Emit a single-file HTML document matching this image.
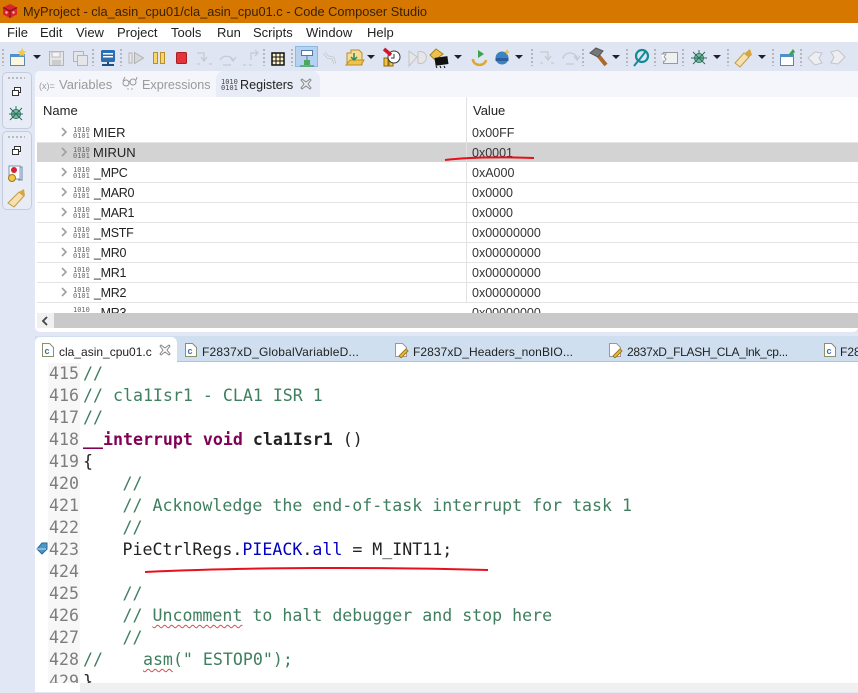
<!DOCTYPE html>
<html><head><meta charset="utf-8">
<style>
html,body{margin:0;padding:0}
body{width:858px;height:692px;overflow:hidden;position:relative;background:#e1e7f4;font-family:"Liberation Sans",sans-serif;font-size:13px;color:#222}
div,span.a,svg{position:absolute}
.t{white-space:pre;line-height:16px}
.r{left:37px;width:821px;height:20px;border-bottom:1px solid #e4e4e4;box-sizing:border-box;background:#fff}
.n{left:93px;white-space:pre;line-height:18px;font-size:13px;color:#222;margin-top:1px}
.u{left:94px;font-size:12.5px;letter-spacing:-.3px}
.v{left:472px;white-space:pre;line-height:18px;font-size:12.5px;color:#333;margin-top:1px}
.b{left:73px;font:7px/6px "DejaVu Sans Mono",monospace;color:#666;white-space:pre;width:16px}
.m{font:16.6px/22px "DejaVu Sans Mono",monospace;white-space:pre;color:#222;margin-top:1px}
.ln{left:49px;color:#7d7d7d}
.c{color:#3f7f5f}
.tab{top:345px;font-size:12px;line-height:14px;white-space:pre;color:#222}
.sq{text-decoration:underline wavy #d05050 1px;text-underline-offset:3px}
</style></head><body>
<!-- title -->
<div style="left:0;top:0;width:858px;height:23px;background:#d67800"></div>
<svg style="left:2px;top:3px" width="16" height="16" viewBox="0 0 16 16"><path d="M8 1L15 4.500V11.500L8 15L1 11.500V4.500Z" fill="#d8232a"/><path d="M1 4.500L8 8L15 4.500M8 8V15" stroke="#7c1010" fill="none"/><circle cx="4.500" cy="9.500" r="1.200" fill="#fbb"/><circle cx="11.500" cy="9.500" r="1.200" fill="#fbb"/></svg>
<div class="t" style="left:23px;top:4px;font-size:12.8px;color:#3a2000">MyProject - cla_asin_cpu01/cla_asin_cpu01.c - Code Composer Studio</div>
<!-- menu -->
<div style="left:0;top:23px;width:858px;height:19px;background:#fff"></div>
<div class="t" style="left:7px;top:25px">File</div>
<div class="t" style="left:40px;top:25px">Edit</div>
<div class="t" style="left:76px;top:25px">View</div>
<div class="t" style="left:117px;top:25px">Project</div>
<div class="t" style="left:171px;top:25px">Tools</div>
<div class="t" style="left:217px;top:25px">Run</div>
<div class="t" style="left:253px;top:25px">Scripts</div>
<div class="t" style="left:306px;top:25px">Window</div>
<div class="t" style="left:367px;top:25px">Help</div>
<!-- toolbar -->
<div style="left:0;top:42px;width:858px;height:29px;background:#dfe5f3"></div>
<div style="left:295px;top:46px;width:23px;height:21px;background:#b5d3f0;border:1px solid #8fb8e0;box-sizing:border-box"></div>
<svg style="left:0;top:42px" width="858" height="29" viewBox="0 0 858 29">
<g stroke="#999" stroke-dasharray="2 2" stroke-width="1.200">
<path d="M3 7V24M93 7V24M121 7V24M264 7V24M292 7V24M532 7V24M583 7V24M627 7V24M655 7V24M683 7V24M728 7V24M773 7V24M801 7V24"/></g>
<g fill="#222"><path d="M33 13h8l-4 4zM367 13h8l-4 4zM454 13h8l-4 4zM515 13h8l-4 4zM612 13h8l-4 4zM713 13h8l-4 4zM758 13h8l-4 4z"/></g>
<!-- new -->
<rect x="10.500" y="12.500" width="14" height="11" fill="#fdf6df" stroke="#5c87b0"/><rect x="10" y="12" width="15" height="3" fill="#4e90cc"/><path d="M22 6l1.500 3 3 .5-2.500 2 .5 3-2.500-1.500-2.500 1.500.5-3-2.500-2 3-.5z" fill="#f3c84a"/>
<!-- save -->
<rect x="49.500" y="9.500" width="14" height="14" fill="#e4e6ea" stroke="#b4b4b4"/><rect x="52" y="10" width="8" height="5" fill="#f4f4f4" stroke="#bbb"/><rect x="52" y="18" width="9" height="5" fill="#ccc"/>
<rect x="73.500" y="9.500" width="10" height="10" fill="#e4e6ea" stroke="#b4b4b4"/><rect x="77.500" y="13.500" width="10" height="10" fill="#e4e6ea" stroke="#b4b4b4"/>
<!-- monitor -->
<rect x="101" y="8" width="14" height="12" rx="1.500" fill="#2a6db0"/><rect x="103" y="11" width="10" height="1.500" fill="#fff"/><rect x="103" y="14" width="10" height="1.500" fill="#fff"/><rect x="102" y="22" width="12" height="2" fill="#1d4f80"/><rect x="107" y="20" width="2" height="2" fill="#1d4f80"/>
<!-- resume suspend stop -->
<rect x="129" y="11" width="3" height="10" fill="#e9e9e9" stroke="#b5b5b5"/><path d="M134.500 10.500L143.500 16L134.500 21.500Z" fill="#d6d8da" stroke="#b0b0b0"/>
<rect x="153.500" y="10.500" width="4" height="11" fill="#f7d76b" stroke="#b98f2a"/><rect x="160.500" y="10.500" width="4" height="11" fill="#f7d76b" stroke="#b98f2a"/>
<rect x="176.500" y="10.500" width="10" height="11" rx="1" fill="#e2343a" stroke="#a81e22"/>
<g fill="none" stroke="#c8cad0" stroke-width="1.300"><path d="M197 11h7v7M201 15l3 4 3-4M197 22h3M209 22h3"/><path d="M220 18a7 6 0 0 1 13 0M230 15l3 4 3-4M223 23h8"/><path d="M243 23h3M249 23h3M251 18v-7h7M255 8l3 3-3 3"/></g>
<!-- grid -->
<rect x="272" y="11" width="12" height="12" fill="#fff3c8" stroke="#111" stroke-width="1.500"/><path d="M276 11v12M280 11v12M272 15h12M272 19h12" stroke="#111"/>
<!-- connect -->
<rect x="301.500" y="8.500" width="11" height="5" fill="#fff" stroke="#5278a8"/><path d="M307 13v5" stroke="#5278a8"/><rect x="304" y="18" width="6" height="5" fill="#4ca85a"/><path d="M300 24h14" stroke="#4ca85a" stroke-width="1.500"/>
<path d="M324 11l4 4 5 1 2 6" stroke="#c4c9d0" stroke-width="3" fill="none"/><path d="M324 11l4 4 5 1 2 6" stroke="#eef0f4" fill="none"/>
<!-- folder dl -->
<path d="M347 23V11h4v-3h8l3 3v12z" fill="#f7dc95" stroke="#b98f2a"/><path d="M346 23l4-5h14l-3 5z" fill="#f2c14a" stroke="#b98f2a"/><path d="M354 11v6M351 15l3 3 3-3" stroke="#2c8a60" stroke-width="1.500" fill="none"/>
<!-- breakpoint -->
<rect x="384" y="16" width="4" height="8" fill="#f4c33a" stroke="#8a6a10"/><rect x="389" y="16" width="4" height="8" fill="#f4c33a" stroke="#8a6a10"/><circle cx="394" cy="15" r="6" fill="#fff" stroke="#333"/><path d="M394 12v4h-3" stroke="#333" fill="none"/><path d="M384 7l7 6" stroke="#d4142a" stroke-width="3.500"/>
<path d="M409 9l8 6-8 9zM418 10a6 6 0 1 1 0 11z" fill="#e6e6e8" stroke="#c4c4c4"/>
<!-- chip -->
<path d="M436 7l7 5-8 6-5-5z" fill="#eec24a" stroke="#a87f18"/><rect x="435" y="15" width="13" height="8" fill="#111" transform="rotate(-8 441 19)"/><path d="M436 24l1 2M440 24l1 2M444 24l1 2" stroke="#111"/>
<!-- launch -->
<path d="M478 8l6 4-6 4z" fill="#3aa54a"/><path d="M473 17a6 5 0 0 0 13 1" stroke="#e0a828" stroke-width="2.500" fill="none"/>
<!-- orb -->
<circle cx="502" cy="16" r="6.500" fill="#3b82c4"/><rect x="495.500" y="16" width="13" height="3" fill="#2a5d9a"/><path d="M507 7l1 2 2 1-2 1-1 2-1-2-2-1 2-1z" fill="#eec24a"/>
<g fill="none" stroke="#c8cad0" stroke-width="1.300"><path d="M540 10h8v7M545 14l3 4 3-4M540 21h3M551 21h3"/><path d="M563 17a7 6 0 0 1 14 0M574 14l3 4 3-4M566 22h8"/></g>
<!-- hammer -->
<path d="M597 12l9 11" stroke="#a96a2a" stroke-width="4"/><path d="M590 11l6-5 7 3-5 6z" fill="#777" stroke="#555"/>
<!-- search -->
<circle cx="642" cy="14" r="6" fill="none" stroke="#168a96" stroke-width="2.200"/><path d="M638 19l-4 5M639 18l7-9" stroke="#168a96" stroke-width="2"/>
<!-- list -->
<rect x="663.500" y="10.500" width="14" height="11" fill="#eef0f2" stroke="#999"/><path d="M661 12h5l-2 3 2 2-2 3" fill="#fff" stroke="#999"/>
<!-- bug -->
<circle cx="699" cy="16" r="4.500" fill="#7fbf9f" stroke="#2c6e5f"/><path d="M693 10l12 12M705 10l-12 12M691 16h16M699 8v3" stroke="#2c6e5f"/>
<!-- brush -->
<path d="M735 21l9-10 5 4-9 10z" fill="#f6e0ad" stroke="#c09a4a"/><path d="M745 11l5-4 2 6-3 2z" fill="#d9a53a"/>
<!-- perspective -->
<rect x="780.500" y="12.500" width="13" height="11" fill="#fff" stroke="#5b85b0"/><rect x="780" y="12" width="14" height="3" fill="#4e90cc"/><path d="M789 12l4-5 2 3-4 4z" fill="#3aa54a"/>
<!-- back fwd -->
<path d="M808 16l7-6 7 1-3 5 3 5-7 2z" fill="#eceef2" stroke="#c2c4c8"/><path d="M845 15l-7-7-7 2 3 5-3 6 7 1z" fill="#eceef2" stroke="#c2c4c8"/>
</svg>
<!-- left sidebar -->
<div style="left:2px;top:72px;width:30px;height:57px;border:1px solid #c5cddd;border-radius:5px;background:#e8ecf6;box-sizing:border-box"></div>
<div style="left:2px;top:131px;width:30px;height:79px;border:1px solid #c5cddd;border-radius:5px;background:#e8ecf6;box-sizing:border-box"></div>
<svg style="left:0;top:70px" width="34" height="145" viewBox="0 0 34 145">
<path d="M8 8h17M8 67h17" stroke="#888" stroke-dasharray="2 2"/>
<g fill="#fff" stroke="#333"><rect x="14.500" y="17.500" width="6" height="5"/><rect x="12.500" y="20.500" width="6" height="5"/><rect x="14.500" y="76.500" width="6" height="5"/><rect x="12.500" y="79.500" width="6" height="5"/></g>
<circle cx="16" cy="44" r="4.500" fill="#7fbf9f" stroke="#2c6e5f"/><path d="M10 38l12 12M22 38l-12 12M9 44h14M16 36v3" stroke="#2c6e5f"/>
<rect x="9" y="96" width="11" height="13" fill="#fff" stroke="#7c94b8"/><circle cx="14" cy="100" r="3" fill="#d82030"/><path d="M20 97h2v13h-4" stroke="#6a88a8" fill="none"/><circle cx="12" cy="108" r="3.500" fill="#f2c84a" stroke="#a07a18"/>
<path d="M8 133l11-11 5 4-10 11z" fill="#f6e0ad" stroke="#c09a4a"/><path d="M19 122l5-3 1 7z" fill="#d9a53a"/>
</svg>
<!-- top panel -->
<div style="left:35px;top:71px;width:823px;height:261px;background:#fff;border-radius:5px"></div>
<div style="left:35px;top:71px;width:823px;height:26px;background:#f5f6fb;border-radius:5px 0 0 0"></div>
<div style="left:216px;top:71px;width:104px;height:26px;background:#e8ecf6;border-radius:8px 8px 0 0"></div>
<div class="t" style="left:39px;top:78px;font-size:9px;color:#9a9a9a">(x)=</div>
<div class="t" style="left:59px;top:77px;font-size:13px;color:#9a9a9a">Variables</div>
<svg style="left:121px;top:76px" width="18" height="16" viewBox="0 0 18 16"><g fill="none" stroke="#999"><circle cx="5" cy="7" r="3"/><circle cx="12" cy="6" r="3"/><path d="M8 6l1-1M2 5l2-4M15 4l1-3"/></g><path d="M6 13h2M10 13h2" stroke="#aaa"/></svg>
<div class="t" style="left:142px;top:77px;font-size:12.6px;color:#9a9a9a">Expressions</div>
<div class="b" style="left:221px;top:79px;color:#444">1010
0101</div>
<div class="t" style="left:240px;top:77px;font-size:12.6px;color:#222">Registers</div>
<svg style="left:300px;top:78px" width="12" height="12" viewBox="0 0 12 12"><path d="M2 1l4 3 4-3 1 1-3 4 3 4-1 1-4-3-4 3-1-1 3-4-3-4z" fill="none" stroke="#888"/></svg>
<div class="t" style="left:43px;top:103px;font-size:13px">Name</div>
<div class="t" style="left:473px;top:103px;font-size:13px">Value</div>
<div class="r" style="top:123px"></div>
<div class="r" style="top:143px;background:#d3d3d3;height:19px;border:0"></div>
<div class="r" style="top:163px"></div>
<div class="r" style="top:183px"></div>
<div class="r" style="top:203px"></div>
<div class="r" style="top:223px"></div>
<div class="r" style="top:243px"></div>
<div class="r" style="top:263px"></div>
<div class="r" style="top:283px"></div>
<div style="left:466px;top:97px;width:1px;height:216px;background:#e2e2e2"></div>
<svg style="left:60px;top:123px" width="10" height="190" viewBox="0 0 10 190"><g fill="none" stroke="#a0a0a0" stroke-width="1.600"><path d="M2 5l4 4-4 4M2 25l4 4-4 4M2 45l4 4-4 4M2 65l4 4-4 4M2 85l4 4-4 4M2 105l4 4-4 4M2 125l4 4-4 4M2 145l4 4-4 4M2 165l4 4-4 4"/></g></svg>
<div class="b" style="top:127px">1010
0101</div><div class="n" style="top:123px">MIER</div><div class="v" style="top:123px">0x00FF</div>
<div class="b" style="top:147px">1010
0101</div><div class="n" style="top:143px">MIRUN</div><div class="v" style="top:143px">0x0001</div>
<div class="b" style="top:167px">1010
0101</div><div class="n u" style="top:163px">_MPC</div><div class="v" style="top:163px">0xA000</div>
<div class="b" style="top:187px">1010
0101</div><div class="n u" style="top:183px">_MAR0</div><div class="v" style="top:183px">0x0000</div>
<div class="b" style="top:207px">1010
0101</div><div class="n u" style="top:203px">_MAR1</div><div class="v" style="top:203px">0x0000</div>
<div class="b" style="top:227px">1010
0101</div><div class="n u" style="top:223px">_MSTF</div><div class="v" style="top:223px">0x00000000</div>
<div class="b" style="top:247px">1010
0101</div><div class="n u" style="top:243px">_MR0</div><div class="v" style="top:243px">0x00000000</div>
<div class="b" style="top:267px">1010
0101</div><div class="n u" style="top:263px">_MR1</div><div class="v" style="top:263px">0x00000000</div>
<div class="b" style="top:287px">1010
0101</div><div class="n u" style="top:283px">_MR2</div><div class="v" style="top:283px">0x00000000</div>
<div style="left:37px;top:303px;width:821px;height:10px;overflow:hidden;background:#fff">
<div class="b" style="left:36px;top:4px">1010</div><div class="n u" style="left:57px;top:0">_MR3</div><div class="v" style="left:435px;top:0">0x00000000</div></div>
<div style="left:37px;top:313px;width:821px;height:15px;background:#f0f0f0"></div>
<div style="left:54px;top:313px;width:804px;height:15px;background:#c9c9c9"></div>
<svg style="left:41px;top:315px" width="10" height="12" viewBox="0 0 10 12"><path d="M6 2L2 6l4 4" fill="none" stroke="#444" stroke-width="1.800"/></svg>
<!-- editor tabs -->
<div style="left:35px;top:336px;width:823px;height:356px;background:#fff"></div>
<div style="left:35px;top:336px;width:823px;height:26px;background:#cfdfef;border-bottom:1px solid #b3c2d4;box-sizing:border-box"></div>
<div style="left:35px;top:337px;width:142px;height:26px;background:#fff;border-radius:5px 6px 0 0"></div>
<svg style="left:41px;top:342px" width="14" height="16" viewBox="0 0 14 16"><path d="M1.500 1.500h7l4 4v9h-11z" fill="#fff" stroke="#8a8f70"/><text x="3.500" y="12" font-size="9" font-weight="bold" font-family="Liberation Sans" fill="#3a6ea5">c</text></svg>
<div class="tab" style="left:59px">cla_asin_cpu01.c</div>
<svg style="left:159px;top:344px" width="12" height="12" viewBox="0 0 12 12"><path d="M2 1l4 3 4-3 1 1-3 4 3 4-1 1-4-3-4 3-1-1 3-4-3-4z" fill="none" stroke="#888"/></svg>
<svg style="left:184px;top:342px" width="14" height="16" viewBox="0 0 14 16"><path d="M1.500 1.500h7l4 4v9h-11z" fill="#fff" stroke="#8a8f70"/><text x="3.500" y="12" font-size="9" font-weight="bold" font-family="Liberation Sans" fill="#3a6ea5">c</text></svg>
<div class="tab" style="left:202px;letter-spacing:.2px">F2837xD_GlobalVariableD...</div>
<svg style="left:394px;top:342px" width="16" height="16" viewBox="0 0 16 16"><path d="M1.500 1.500h7l4 4v9h-11z" fill="#fff" stroke="#999"/><path d="M5 14l7-7 2 2-7 7z" fill="#e8b93e" stroke="#a07a18"/></svg>
<div class="tab" style="left:413px;letter-spacing:.08px">F2837xD_Headers_nonBIO...</div>
<svg style="left:608px;top:342px" width="16" height="16" viewBox="0 0 16 16"><path d="M1.500 1.500h7l4 4v9h-11z" fill="#fff" stroke="#999"/><path d="M5 14l7-7 2 2-7 7z" fill="#e8b93e" stroke="#a07a18"/></svg>
<div class="tab" style="left:627px;letter-spacing:-.28px">2837xD_FLASH_CLA_lnk_cp...</div>
<svg style="left:823px;top:342px" width="14" height="16" viewBox="0 0 14 16"><path d="M1.500 1.500h7l4 4v9h-11z" fill="#fff" stroke="#8a8f70"/><text x="3.500" y="12" font-size="9" font-weight="bold" font-family="Liberation Sans" fill="#3a6ea5">c</text></svg>
<div class="tab" style="left:840px">F28</div>
<!-- code -->
<div style="left:48px;top:363px;width:32px;height:329px;background:#f7f7f7"></div>
<div class="m ln" style="top:362px">415</div><div class="m c" style="left:83px;top:362px">//</div>
<div class="m ln" style="top:384px">416</div><div class="m c" style="left:83px;top:384px">// cla1Isr1 - CLA1 ISR 1</div>
<div class="m ln" style="top:406px">417</div><div class="m c" style="left:83px;top:406px">//</div>
<div class="m ln" style="top:428px">418</div><div class="m" style="left:83px;top:428px"><b style="color:#7f0055">__interrupt void</b> <b>cla1Isr1</b> ()</div>
<div class="m ln" style="top:450px">419</div><div class="m" style="left:83px;top:450px">{</div>
<div class="m ln" style="top:472px">420</div><div class="m c" style="left:122.500px;top:472px">//</div>
<div class="m ln" style="top:494px">421</div><div class="m c" style="left:122.500px;top:494px">// Acknowledge the end-of-task interrupt for task 1</div>
<div class="m ln" style="top:516px">422</div><div class="m c" style="left:122.500px;top:516px">//</div>
<div class="m ln" style="top:538px">423</div><div class="m" style="left:122.500px;top:538px">PieCtrlRegs.<span style="color:#0000c0">PIEACK</span>.<span style="color:#0000c0">all</span> = M_INT11;</div>
<div class="m ln" style="top:560px">424</div>
<div class="m ln" style="top:582px">425</div><div class="m c" style="left:122.500px;top:582px">//</div>
<div class="m ln" style="top:604px">426</div><div class="m c" style="left:122.500px;top:604px">// <span class="sq">Uncomment</span> to halt debugger and stop here</div>
<div class="m ln" style="top:626px">427</div><div class="m c" style="left:122.500px;top:626px">//</div>
<div class="m ln" style="top:648px">428</div><div class="m c" style="left:83px;top:648px">//    <span class="sq">asm</span>(" ESTOP0");</div>
<div class="m ln" style="top:670px">429</div><div class="m" style="left:83px;top:670px">}</div>
<div style="left:80px;top:683px;width:778px;height:9px;background:#f0f0f0"></div>
<div style="left:48px;top:683px;width:32px;height:9px;background:#fff"></div>
<svg style="left:36px;top:541px" width="13" height="14" viewBox="0 0 13 14"><path d="M1 8l5-6h5v6l-5 5z" fill="#4a96c8" stroke="#2a6a94"/><path d="M1 8h9" stroke="#bfe0f2"/></svg>
<!-- red annotations -->
<svg style="left:0;top:0" width="858" height="692" viewBox="0 0 858 692"><path d="M445 160C470 157 505 157 534 158" fill="none" stroke="#e8101c" stroke-width="2"/><path d="M145 572C250 567 380 567 488 570" fill="none" stroke="#e8101c" stroke-width="2"/></svg>
</body></html>
